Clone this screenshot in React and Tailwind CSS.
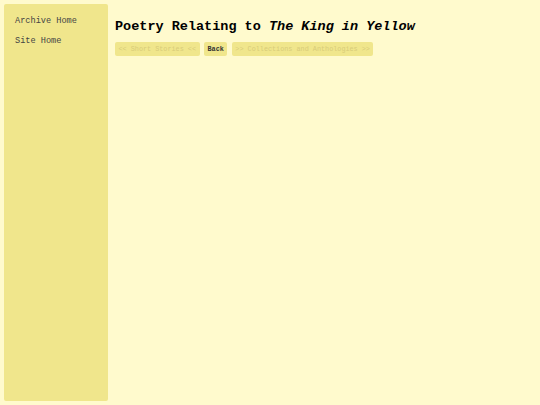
export default function App() {
  const mono = { fontFamily: '"Liberation Mono", "Courier New", monospace' };
  return (
    <div className="min-h-screen w-full bg-[#fffacd] p-1 flex gap-[7px]" style={mono}>
      <nav className="w-[104px] shrink-0 min-h-[397px] bg-[#f0e68c] rounded-[2px] pt-[11px] pl-[11px] flex flex-col gap-[8px] text-[8.6px] leading-[12px] text-[#444]">
        <a href="#">Archive Home</a>
        <a href="#">Site Home</a>
      </nav>
      <main className="flex-1 pt-[14px]">
        <h1 className="text-[13.5px] leading-[17px] font-bold text-black">
          Poetry Relating to <i>The King in Yellow</i>
        </h1>
        <div className="mt-[7px] flex gap-[4.5px] text-[6.8px] leading-[14px]">
          <span className="bg-[#f0e68c] rounded-[2px] px-[3.5px] h-[14px] text-[#d8cc7a]">&lt;&lt; Short Stories &lt;&lt;</span>
          <span className="bg-[#f0e68c] rounded-[2px] px-[3.5px] h-[14px] text-[#333] font-bold">Back</span>
          <span className="bg-[#f0e68c] rounded-[2px] px-[3.5px] h-[14px] text-[#d8cc7a]">&gt;&gt; Collections and Anthologies &gt;&gt;</span>
        </div>
      </main>
    </div>
  );
}
